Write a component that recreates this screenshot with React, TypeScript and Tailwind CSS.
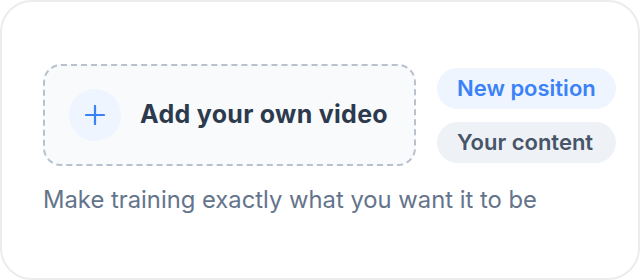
const App = () => {
  return (
    <div className="w-[640px] h-[280px] bg-white font-['Inter',sans-serif]">
      <div className="h-full border-2 border-[#ececec] rounded-[32px] pl-[41px] pt-[62px]">
        <div className="flex items-center gap-[21px]">
          {/* Upload box */}
          <div className="w-[373px] h-[102px] rounded-[18px] border-2 border-dashed border-[#b9c1cd] bg-[#f8fafc] flex items-center pl-[24px] gap-[19px]">
            <div className="w-[52px] h-[52px] rounded-full bg-[#eef5ff] flex items-center justify-center">
              <svg width="20" height="20" viewBox="0 0 20 20" fill="none">
                <path d="M10 1v18M1 10h18" stroke="#3b82f6" strokeWidth="2.2" strokeLinecap="round" />
              </svg>
            </div>
            <span className="text-[25px] font-bold text-[#2d3a4d] tracking-[0.3px]">Add your own video</span>
          </div>

          {/* Tags */}
          <div className="flex flex-col gap-[13px]">
            <span className="h-[41px] px-[20px] rounded-full bg-[#eef5ff] text-[#3b82f6] text-[22px] font-semibold flex items-center">
              New position
            </span>
            <span className="h-[41px] px-[20px] rounded-full bg-[#eef1f6] text-[#475569] text-[22px] font-semibold flex items-center">
              Your content
            </span>
          </div>
        </div>

        <p className="mt-[18px] text-[23.8px] leading-[32px] text-[#64748b]">Make training exactly what you want it to be</p>
      </div>
    </div>
  );
};

export default App;
